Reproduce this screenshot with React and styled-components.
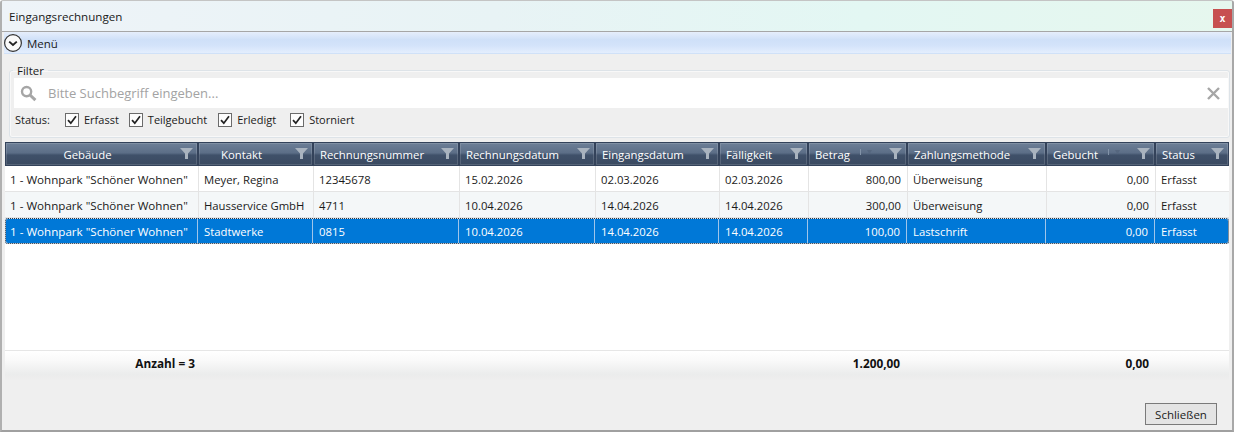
import React from 'react';
import styled, { createGlobalStyle } from 'styled-components';

const Global = createGlobalStyle`
  html, body { margin: 0; padding: 0; background: #fff; overflow: hidden; }
  body { font-family: "Open Sans", "Noto Sans", sans-serif; font-size: 11.5px; color: #1a1a1a; }
  * { box-sizing: border-box; }
`;

const COLS = '193px 115px 146px 136px 124px 89px 99px 139px 109px 74px';

const Window = styled.div`
  width: 1234px;
  height: 432px;
  display: flex;
  flex-direction: column;
  background: #efefef;
  border-top: 1px solid #c4c4c4;
  border-right: 2px solid #a8a8a8;
  border-bottom: 2px solid #a0a0a0;
  border-left: 2px solid #b0b0b0;
  border-radius: 3px 3px 0 0;
  overflow: hidden;
`;

const TitleBar = styled.div`
  height: 31px;
  flex: none;
  display: flex;
  align-items: center;
  justify-content: space-between;
  padding: 0 0 0 7px;
  background: linear-gradient(90deg, #eef3f8 0%, #e8f3f5 40%, #e3f7f3 70%, #e6f7ee 100%);
  border-bottom: 1px solid #a6a6a6;
  font-size: 11.6px;
`;

const CloseX = styled.div`
  width: 19px;
  height: 19px;
  margin-top: 4px;
  background: #c75050;
  color: #fff;
  font-family: "DejaVu Sans Mono", monospace;
  font-size: 10px;
  font-weight: 700;
  display: flex;
  align-items: center;
  justify-content: center;
`;

const MenuBar = styled.div`
  height: 22px;
  flex: none;
  margin: 0 1px 0 2px;
  display: flex;
  align-items: center;
  gap: 4px;
  background: linear-gradient(180deg, #e6eefb 0%, #cfe0f8 35%, #d3e3fa 60%, #e4eefe 96%, #b5d0f0 100%);
  font-size: 11.5px;
`;

const MenuIcon = styled.svg`
  width: 20px;
  height: 20px;
  flex: none;
  margin-left: -1px;
`;

const Body = styled.div`
  flex: 1;
  display: flex;
  flex-direction: column;
  padding: 0 3px;
`;

const FilterGroup = styled.fieldset`
  margin: 9px 0 0 4px;
  width: 1221px;
  height: 75px;
  padding: 0 1px 0 4px;
  border: 1px solid #dde3e8;
  border-radius: 3px;
  box-shadow: inset 0 0 0 1px #f8f8f8;
`;

const FilterLegend = styled.legend`
  margin-left: -1px;
  padding: 0 4px;
  font-size: 11.5px;
  line-height: 15px;
`;

const SearchBox = styled.div`
  height: 30px;
  display: flex;
  align-items: center;
  background: #fff;
  padding: 0 8px 0 6px;
`;

const SearchText = styled.div`
  flex: 1;
  margin-left: 11px;
  font-size: 13px;
  color: #a3a3a3;
`;

const StatusRow = styled.div`
  height: 23px;
  display: flex;
  align-items: center;
  font-size: 11px;
`;

const StatusLabel = styled.span`
  width: 50px;
  margin-left: 1px;
`;

const Check = styled.label`
  display: flex;
  align-items: center;
  gap: 5px;
  margin-right: ${p => p.$gap}px;
`;

const CheckBox = styled.span`
  width: 14px;
  height: 14px;
  border: 1px solid #6b6b6b;
  background: #fdfdfd;
  display: flex;
  align-items: center;
  justify-content: center;
`;

const Table = styled.div`
  margin-top: 4px;
  width: 1224px;
  display: flex;
  flex-direction: column;
  height: 208px;
  flex: none;
  background: #fff;
`;

const HeaderRow = styled.div`
  display: grid;
  grid-template-columns: ${COLS};
  height: 24px;
  flex: none;
`;

const HeaderCell = styled.div`
  position: relative;
  display: flex;
  align-items: center;
  justify-content: ${p => (p.$center ? 'center' : 'flex-start')};
  padding: 0 ${p => (p.$center ? '28px' : '6px')} 0 ${p => (p.$center ? '0' : '6px')};
  color: #fff;
  font-size: 11.35px;
  background: linear-gradient(180deg, #6d7f97 0%, #5c6e87 45%, #3f5069 55%, #3a4a61 100%);
  border: 1px solid #33425a;
  box-shadow: inset 0 0 0 1px rgba(255, 255, 255, 0.14);
`;

const FilterIcon = styled.svg`
  position: absolute;
  right: 4px;
  top: 5px;
  width: 13px;
  height: 11px;
`;

const SortMark = styled.svg`
  position: absolute;
  right: 33px;
  top: 6px;
  width: 13px;
  height: 7px;
`;

const Rows = styled.div`
  flex: 1;
`;

const Row = styled.div`
  position: relative;
  display: grid;
  grid-template-columns: ${COLS};
  height: 26px;
  background: ${p => (p.$selected ? '#0078d7' : p.$alt ? '#f4f7f8' : '#fff')};
  color: ${p => (p.$selected ? '#fff' : '#1a1a1a')};
  border-bottom: ${p => (p.$selected ? '0' : '1px solid #e4e4e4')};
  border-radius: ${p => (p.$selected ? '3px' : '0')};
  box-shadow: ${p => (p.$selected ? 'inset 0 0 0 1px #dbe6f0' : 'none')};

  &::after {
    content: '';
    display: ${p => (p.$selected ? 'block' : 'none')};
    position: absolute;
    inset: 0;
    border: 1px dotted #2a3442;
    border-radius: 3px;
  }
`;

const Cell = styled.div`
  display: flex;
  align-items: center;
  justify-content: ${p => (p.$right ? 'flex-end' : 'flex-start')};
  padding: ${p => (p.$selected ? '1px' : '2px')} 6px 0 ${p => (p.$first ? '5px' : p.$selected ? '6px' : '5px')};
  white-space: nowrap;
  font-size: ${p => (p.$first ? '11.6px' : '11.3px')};
  border-left: ${p => (p.$first || p.$selected ? '0' : '1px solid #e4e4e4')};
  border-right: ${p => (p.$selected && !p.$last ? '1px solid #9fc5ea' : '0')};
`;

const Footer = styled.div`
  width: 1224px;
  height: 30px;
  flex: none;
  display: grid;
  grid-template-columns: ${COLS};
  border-top: 1px solid #e6e6e6;
  background: linear-gradient(180deg, #ffffff 0%, #fafafa 30%, #ebecec 80%, #eeeeee 100%);
`;

const FooterCell = styled.div`
  display: flex;
  justify-content: flex-end;
  padding: 4px ${p => p.$pad || 3}px 0 0;
  font-size: 11.8px;
  font-weight: 700;
  color: #111;
  height: 20px;
`;

const Actions = styled.div`
  flex: 1;
  display: flex;
  justify-content: flex-end;
  align-items: flex-start;
  padding: 23px 12px 0 0;
`;

const CloseButton = styled.button`
  width: 72px;
  height: 22px;
  padding: 0;
  background: #e4e4e4;
  border: 1px solid #7a7a7a;
  color: #1a1a1a;
  font-family: inherit;
  font-size: 11.5px;
`;

const columns = [
  { label: 'Gebäude', center: true },
  { label: 'Kontakt', center: true },
  { label: 'Rechnungsnummer' },
  { label: 'Rechnungsdatum' },
  { label: 'Eingangsdatum' },
  { label: 'Fälligkeit' },
  { label: 'Betrag', right: true },
  { label: 'Zahlungsmethode' },
  { label: 'Gebucht', right: true },
  { label: 'Status' },
];

const rows = [
  ['1 - Wohnpark "Schöner Wohnen"', 'Meyer, Regina', '12345678', '15.02.2026', '02.03.2026', '02.03.2026', '800,00', 'Überweisung', '0,00', 'Erfasst'],
  ['1 - Wohnpark "Schöner Wohnen"', 'Hausservice GmbH', '4711', '10.04.2026', '14.04.2026', '14.04.2026', '300,00', 'Überweisung', '0,00', 'Erfasst'],
  ['1 - Wohnpark "Schöner Wohnen"', 'Stadtwerke', '0815', '10.04.2026', '14.04.2026', '14.04.2026', '100,00', 'Lastschrift', '0,00', 'Erfasst'],
];

const statuses = [
  { label: 'Erfasst', gap: 10 },
  { label: 'Teilgebucht', gap: 11 },
  { label: 'Erledigt', gap: 14 },
  { label: 'Storniert', gap: 0 },
];

const Tick = () => (
  <svg width="10" height="10" viewBox="0 0 10 10">
    <path d="M1 5.2 L3.8 8.2 L9 1.2" fill="none" stroke="#222" strokeWidth="1.7" />
  </svg>
);

const App = () => (
  <Window>
    <Global />
    <TitleBar>
      <span>Eingangsrechnungen</span>
      <CloseX>x</CloseX>
    </TitleBar>
    <MenuBar>
      <MenuIcon viewBox="0 0 20 20">
        <circle cx="10" cy="10" r="8.4" fill="#fafafa" stroke="#333" strokeWidth="1.2" />
        <path d="M6.2 8.6 L10 12 L13.8 8.6" fill="none" stroke="#222" strokeWidth="1.9" />
      </MenuIcon>
      <span>Menü</span>
    </MenuBar>
    <Body>
      <FilterGroup>
        <FilterLegend>Filter</FilterLegend>
        <SearchBox>
          <svg width="17" height="17" viewBox="0 0 17 17">
            <circle cx="6.6" cy="6.6" r="4.6" fill="none" stroke="#a6a6a6" strokeWidth="2.4" />
            <path d="M10 10 L15.4 15.2" stroke="#a6a6a6" strokeWidth="3" />
          </svg>
          <SearchText>Bitte Suchbegriff eingeben...</SearchText>
          <svg width="13" height="13" viewBox="0 0 13 13">
            <path d="M1 1 L12 12 M12 1 L1 12" stroke="#a6a6a6" strokeWidth="2.4" />
          </svg>
        </SearchBox>
        <StatusRow>
          <StatusLabel>Status:</StatusLabel>
          {statuses.map(s => (
            <Check key={s.label} $gap={s.gap}>
              <CheckBox><Tick /></CheckBox>
              {s.label}
            </Check>
          ))}
        </StatusRow>
      </FilterGroup>
      <Table>
        <HeaderRow>
          {columns.map(c => (
            <HeaderCell key={c.label} $center={c.center}>
              {c.label}
              {c.right && (
                <SortMark viewBox="0 0 13 7">
                  <path d="M0.5 0 V6" stroke="#8293a8" strokeWidth="1" />
                  <path d="M7 1 H12 L9.5 5 Z" fill="#56677f" />
                </SortMark>
              )}
              <FilterIcon viewBox="0 0 13 11">
                <path d="M0 0 H13 L8 5.5 V11 H5 V5.5 Z" fill="#a9b3bf" />
              </FilterIcon>
            </HeaderCell>
          ))}
        </HeaderRow>
        <Rows>
          {rows.map((r, i) => (
            <Row key={i} $alt={i === 1} $selected={i === 2}>
              {r.map((v, j) => (
                <Cell key={j} $first={j === 0} $right={columns[j].right} $selected={i === 2} $last={j === 9}>{v}</Cell>
              ))}
            </Row>
          ))}
        </Rows>
      </Table>
      <Footer>
        <FooterCell>Anzahl = 3</FooterCell>
        <FooterCell /><FooterCell /><FooterCell /><FooterCell /><FooterCell />
        <FooterCell $pad={7}>1.200,00</FooterCell>
        <FooterCell />
        <FooterCell $pad={6}>0,00</FooterCell>
        <FooterCell />
      </Footer>
      <Actions>
        <CloseButton>Schließen</CloseButton>
      </Actions>
    </Body>
  </Window>
);

export default App;
